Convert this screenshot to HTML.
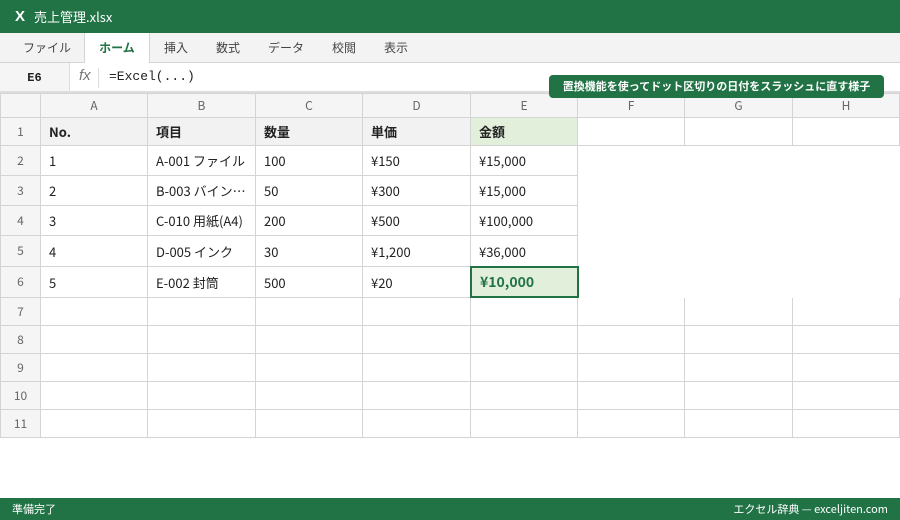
<!DOCTYPE html>
<html><head><meta charset="utf-8"><style>
*{margin:0;padding:0;box-sizing:border-box}
body{width:900px;height:520px;overflow:hidden;background:#fff;font-family:"Noto Sans CJK JP","Liberation Sans",sans-serif;position:relative;color:#222}
.t{position:absolute;left:0;top:0;width:900px;height:33px;background:#217346;color:#fff;font-size:13px;display:flex;align-items:center}
.tabs{position:absolute;top:33px;left:0;width:900px;height:30px;background:#f3f3f3;border-bottom:1px solid #d4d4d4}
.tab{position:absolute;top:0;height:30px;line-height:30px;font-size:12px;color:#444}
.fb{position:absolute;top:63px;left:0;width:900px;height:30px;background:#fff;border-bottom:2px solid #ddd}
.c{position:absolute;border-right:1px solid #d4d4d4;border-bottom:1px solid #d4d4d4;font-size:13px;padding-left:8px;display:flex;align-items:center;white-space:nowrap;overflow:hidden;line-height:1}
.h{background:#f5f5f5;color:#666;justify-content:center;padding:0;font-size:12px}
.b{font-weight:bold;background:#f2f2f2}
.st{position:absolute;top:498px;left:0;width:900px;height:22px;background:#217346;color:#fff;font-size:11px}
</style></head><body>
<div class="t"><span style="margin-left:15px;font-weight:bold;font-size:15px;font-family:'Liberation Sans',sans-serif">X</span><span style="margin-left:9px">売上管理.xlsx</span></div>
<div class="tabs">
<span class="tab" style="left:23px">ファイル</span>
<span class="tab" style="left:84px;width:66px;background:#fff;border-left:1px solid #d4d4d4;border-right:1px solid #d4d4d4;height:31px;text-align:center;color:#217346;font-weight:bold">ホーム</span>
<span class="tab" style="left:164px">挿入</span>
<span class="tab" style="left:216px">数式</span>
<span class="tab" style="left:268px">データ</span>
<span class="tab" style="left:332px">校閲</span>
<span class="tab" style="left:384px">表示</span>
</div>
<div class="fb">
<div style="position:absolute;left:0;top:0;width:70px;height:28px;background:#f5f5f5;border-right:1px solid #ddd;text-align:center;line-height:30px;font-size:12px;font-weight:bold;font-family:'Liberation Mono',monospace">E6</div>
<div style="position:absolute;left:79px;top:4px;font-style:italic;color:#777;font-size:15px;font-family:'Liberation Sans',sans-serif">fx</div>
<div style="position:absolute;left:98px;top:5px;height:20px;border-left:1px solid #ddd"></div>
<div style="position:absolute;left:109px;top:6px;font-family:'Liberation Mono',monospace;font-size:13px">=Excel(...)</div>
</div>
<div style="position:absolute;left:0;top:93px;width:900px;height:345px;border-left:1px solid #d4d4d4;border-top:1px solid #d4d4d4">
<div class="c h" style="left:0;top:0;width:40px;height:24px"></div>
<div class="c h" style="left:40px;top:0;width:107px;height:24px">A</div>
<div class="c h" style="left:147px;top:0;width:108px;height:24px">B</div>
<div class="c h" style="left:255px;top:0;width:107px;height:24px">C</div>
<div class="c h" style="left:362px;top:0;width:108px;height:24px">D</div>
<div class="c h" style="left:470px;top:0;width:107px;height:24px">E</div>
<div class="c h" style="left:577px;top:0;width:107px;height:24px">F</div>
<div class="c h" style="left:684px;top:0;width:108px;height:24px">G</div>
<div class="c h" style="left:792px;top:0;width:107px;height:24px">H</div>
<div class="c h" style="left:0;top:24px;width:40px;height:28px">1</div>
<div class="c b" style="left:40px;top:24px;width:107px;height:28px">No.</div>
<div class="c b" style="left:147px;top:24px;width:108px;height:28px">項目</div>
<div class="c b" style="left:255px;top:24px;width:107px;height:28px">数量</div>
<div class="c b" style="left:362px;top:24px;width:108px;height:28px">単価</div>
<div class="c b" style="left:470px;top:24px;width:107px;height:28px;background:#e2efda">金額</div>
<div class="c" style="left:577px;top:24px;width:107px;height:28px"></div>
<div class="c" style="left:684px;top:24px;width:108px;height:28px"></div>
<div class="c" style="left:792px;top:24px;width:107px;height:28px"></div>
<div class="c h" style="left:0;top:52px;width:40px;height:30px">2</div>
<div class="c" style="left:40px;top:52px;width:107px;height:30px">1</div>
<div class="c" style="left:147px;top:52px;width:108px;height:30px">A-001 ファイル</div>
<div class="c" style="left:255px;top:52px;width:107px;height:30px">100</div>
<div class="c" style="left:362px;top:52px;width:108px;height:30px">¥150</div>
<div class="c" style="left:470px;top:52px;width:107px;height:30px">¥15,000</div>
<div class="c h" style="left:0;top:82px;width:40px;height:30px">3</div>
<div class="c" style="left:40px;top:82px;width:107px;height:30px">2</div>
<div class="c" style="left:147px;top:82px;width:108px;height:30px">B-003 バイン…</div>
<div class="c" style="left:255px;top:82px;width:107px;height:30px">50</div>
<div class="c" style="left:362px;top:82px;width:108px;height:30px">¥300</div>
<div class="c" style="left:470px;top:82px;width:107px;height:30px">¥15,000</div>
<div class="c h" style="left:0;top:112px;width:40px;height:30px">4</div>
<div class="c" style="left:40px;top:112px;width:107px;height:30px">3</div>
<div class="c" style="left:147px;top:112px;width:108px;height:30px">C-010 用紙(A4)</div>
<div class="c" style="left:255px;top:112px;width:107px;height:30px">200</div>
<div class="c" style="left:362px;top:112px;width:108px;height:30px">¥500</div>
<div class="c" style="left:470px;top:112px;width:107px;height:30px">¥100,000</div>
<div class="c h" style="left:0;top:142px;width:40px;height:31px">5</div>
<div class="c" style="left:40px;top:142px;width:107px;height:31px">4</div>
<div class="c" style="left:147px;top:142px;width:108px;height:31px">D-005 インク</div>
<div class="c" style="left:255px;top:142px;width:107px;height:31px">30</div>
<div class="c" style="left:362px;top:142px;width:108px;height:31px">¥1,200</div>
<div class="c" style="left:470px;top:142px;width:107px;height:31px">¥36,000</div>
<div class="c h" style="left:0;top:173px;width:40px;height:31px">6</div>
<div class="c" style="left:40px;top:173px;width:107px;height:31px">5</div>
<div class="c" style="left:147px;top:173px;width:108px;height:31px">E-002 封筒</div>
<div class="c" style="left:255px;top:173px;width:107px;height:31px">500</div>
<div class="c" style="left:362px;top:173px;width:108px;height:31px">¥20</div>
<div class="c" style="left:469px;top:172px;width:109px;height:32px;border:2px solid #217346;background:#e2efda;color:#217346;font-weight:bold;font-size:14px">¥10,000</div>
<div class="c h" style="left:0;top:204px;width:40px;height:28px">7</div>
<div class="c h" style="left:0;top:232px;width:40px;height:28px">8</div>
<div class="c h" style="left:0;top:260px;width:40px;height:28px">9</div>
<div class="c h" style="left:0;top:288px;width:40px;height:28px">10</div>
<div class="c h" style="left:0;top:316px;width:40px;height:28px">11</div>
<div style="position:absolute;left:40px;top:204px;width:859px;height:140px;background-image:linear-gradient(to bottom,transparent 27px,#d4d4d4 27px);background-size:859px 28px"></div>
<div style="position:absolute;top:204px;height:140px;left:146px;border-left:1px solid #d4d4d4"></div>
<div style="position:absolute;top:204px;height:140px;left:254px;border-left:1px solid #d4d4d4"></div>
<div style="position:absolute;top:204px;height:140px;left:361px;border-left:1px solid #d4d4d4"></div>
<div style="position:absolute;top:204px;height:140px;left:469px;border-left:1px solid #d4d4d4"></div>
<div style="position:absolute;top:204px;height:140px;left:576px;border-left:1px solid #d4d4d4"></div>
<div style="position:absolute;top:204px;height:140px;left:683px;border-left:1px solid #d4d4d4"></div>
<div style="position:absolute;top:204px;height:140px;left:791px;border-left:1px solid #d4d4d4"></div>
<div style="position:absolute;top:204px;height:140px;left:898px;border-left:1px solid #d4d4d4"></div>
</div>
<div style="position:absolute;left:549px;top:75px;width:335px;height:23px;background:#217346;color:#fff;border-radius:4px;font-size:11px;font-weight:bold;text-align:center;line-height:23px">置換機能を使ってドット区切りの日付をスラッシュに直す様子</div>
<div class="st"><span style="position:absolute;left:12px;top:3px">準備完了</span><span style="position:absolute;right:12px;top:3px">エクセル辞典 — exceljiten.com</span></div>
</body></html>
